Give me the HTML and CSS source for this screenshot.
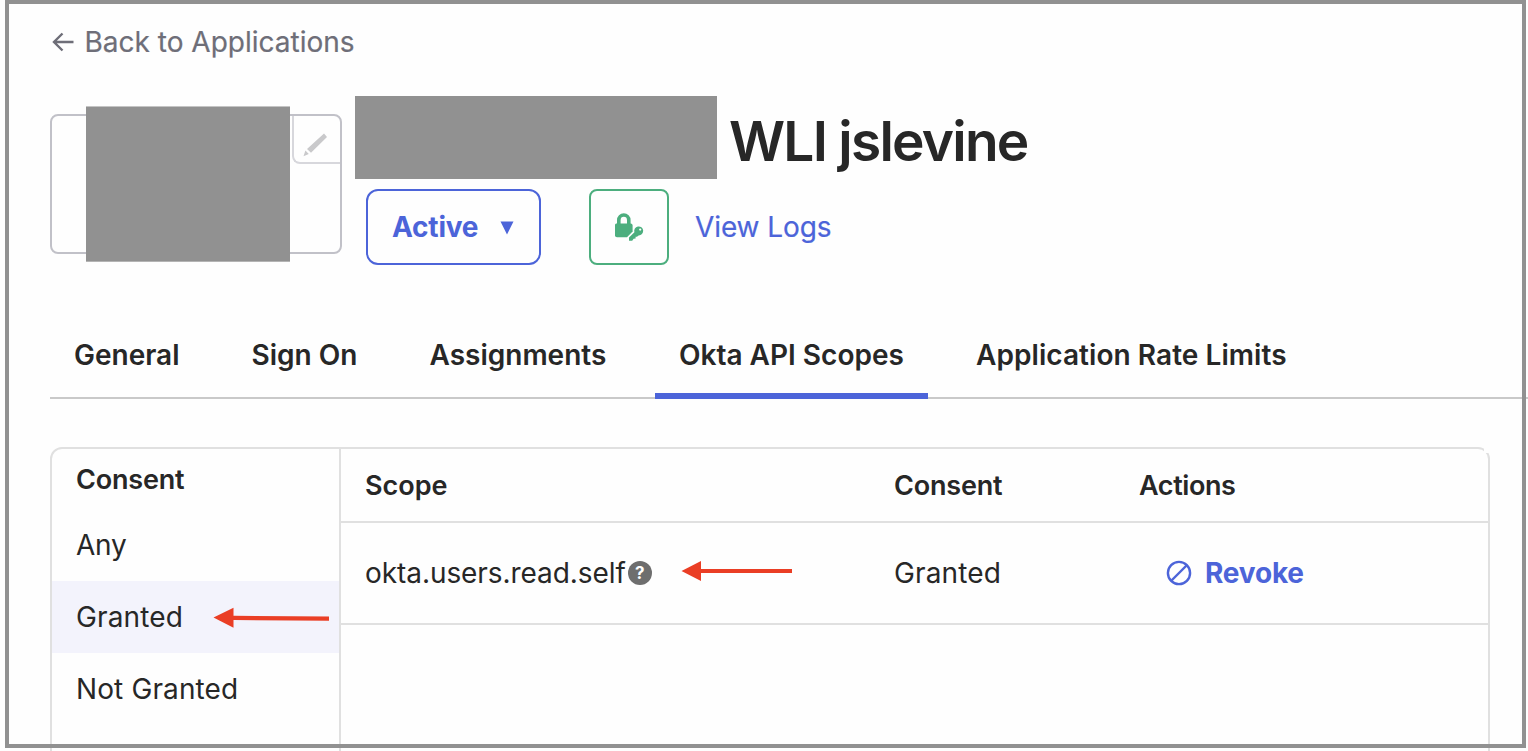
FILE: index.html
```html
<!DOCTYPE html>
<html lang="en">
<head>
<meta charset="utf-8">
<title>Okta API Scopes</title>
<link rel="stylesheet" href="styles.css">
</head>
<body>
<main class="page">
  <a class="back">
    <svg class="back-icon" width="24" height="20" viewBox="0 0 24 20"><path d="M22.5 10H3.5M11.5 1.5L3 10L11.5 18.5" fill="none" stroke="currentColor" stroke-width="2.4"/></svg>
    <span class="t-back">Back to Applications</span>
  </a>
  <header class="app-header">
    <div class="logo-box">
      <div class="logo-mask"></div>
      <div class="logo-edit">
        <svg width="24" height="24" viewBox="0 0 24 24" fill="#c9c9cb"><path d="M21 0.6L24 3.9L8 19.8L4 16ZM2.4 17.6L5.8 21L0.5 23.2Z"/></svg>
      </div>
    </div>
    <div class="app-info">
      <div class="title-row">
        <div class="title-mask"></div>
        <h1 class="title">WLI jslevine</h1>
      </div>
      <div class="actions">
        <button class="status"><span class="t-active">Active</span><svg class="caret" width="14" height="14" viewBox="0 0 14 14"><path d="M0.5 0.5H13.5L7 13.5Z" fill="currentColor"/></svg></button>
        <div class="lock">
          <svg width="30" height="30" viewBox="0 0 30 30">
            <path d="M4.8 12V8.2a5 5.2 0 0 1 10 0V12" fill="none" stroke="currentColor" stroke-width="3.6"/>
            <path d="M2.2 11.5H16.7Q18.6 11.5 18.6 13.5V19.5L13 25.2H3Q1 25.2 1 23.5V13Q1 11.5 2.2 11.5Z" fill="currentColor"/>
            <path d="M20.4 20.2A4.5 4.5 0 1 1 24.6 23.4L23 24.8L21.6 24.8L21.6 26.4L19.6 26.8L18.2 28.8H15V25.4Z" fill="currentColor"/>
            <circle cx="26.2" cy="17.6" r="1.1" fill="#fefefe"/>
          </svg>
        </div>
        <a class="logs"><span class="t-logs">View Logs</span></a>
      </div>
    </div>
  </header>
  <nav class="tabs">
    <a class="tab tab-general"><span class="t-general">General</span></a>
    <a class="tab tab-sign"><span class="t-sign">Sign On</span></a>
    <a class="tab tab-assign"><span class="t-assign">Assignments</span></a>
    <a class="tab tab-scopes"><span class="t-scopes">Okta API Scopes</span></a>
    <a class="tab tab-limits"><span class="t-limits">Application Rate Limits</span></a>
  </nav>
  <section class="panel">
    <aside class="filters">
      <h2 class="filter-title"><span class="heading">Consent</span></h2>
      <a class="filter"><span class="t-any">Any</span></a>
      <a class="filter selected"><span class="t-granted">Granted</span>
        <svg class="arrow-filter" width="118" height="22" viewBox="0 0 118 22" fill="#ea3e25"><path d="M0.5 10.6L20.5 0.8V8.7L116 9.6V13.8L20.5 13V20.8Z"/></svg>
      </a>
      <a class="filter"><span class="t-not">Not Granted</span></a>
    </aside>
    <div class="table">
      <div class="row head">
        <div><span class="heading scope">Scope</span></div><div><span class="heading">Consent</span></div><div><span class="heading actions-head">Actions</span></div>
      </div>
      <div class="row body-row">
        <div><span class="t-okta">okta.users.read.self</span><span class="help">?</span>
          <svg class="arrow-scope" width="112" height="22" viewBox="0 0 112 22" fill="#ea3e25"><path d="M0.5 11L20 1V9H111V13H20V21Z"/></svg>
        </div>
        <div><span class="t-granted">Granted</span></div>
        <div class="revoke"><svg width="26" height="26" viewBox="0 0 26 26"><circle cx="13" cy="13" r="11.1" fill="none" stroke="currentColor" stroke-width="2.4"/><path d="M21 5L5 21" stroke="currentColor" stroke-width="2.4"/></svg><span class="t-revoke">Revoke</span></div>
      </div>
    </div>
    <div class="corner"></div>
  </section>
</main>
<div class="frame"></div>
</body>
</html>
```
FILE: styles.css
```css
* { box-sizing: border-box; }
body {
  margin: 0;
  height: 751px;
  overflow: hidden;
  background: #fefefe;
  color: #272727;
  font: 400 28px/36px Inter, "Liberation Sans", sans-serif;
}
.page { height: 751px; padding-left: 50px; overflow: hidden; }
span { white-space: nowrap; }
.back { display: flex; align-items: center; gap: 9.5px; height: 36px; margin-top: 24px; padding-left: 1px; color: #6e6e78; -webkit-text-stroke: 0.2px; }
.app-header { display: flex; gap: 13px; margin-top: 36px; height: 169px; }
.logo-box { position: relative; width: 292px; height: 140px; margin-top: 18px; border: 2px solid #c1c1c8; border-radius: 8px; }
.logo-mask { position: absolute; left: 34px; top: -10px; width: 204px; height: 156px; background: #919191; border-top: 1px solid #c4c4c4; border-bottom: 1px solid #b4b4b4; }
.logo-edit { position: absolute; right: 0; top: 0; width: 48px; height: 48px; padding: 17px 0 0 9px; border-left: 2px solid #d7d7dc; border-bottom: 2px solid #d7d7dc; border-bottom-left-radius: 8px; line-height: 0; }
.title-row { display: flex; align-items: center; gap: 12px; height: 83px; }
.title-mask { width: 362px; height: 83px; background: #919191; }
.title { margin: 7px 0 0; font-size: 55px; line-height: 66px; font-weight: 600; letter-spacing: -1.75px; white-space: nowrap; }
.actions { display: flex; align-items: center; margin-top: 10px; padding-left: 11px; }
.status { display: flex; align-items: center; justify-content: space-between; width: 175px; height: 76px; padding: 0 25px 0 24px; border: 2px solid #4c64d9; border-radius: 12px; background: none; color: #4c64d9; font: inherit; font-weight: 700; letter-spacing: -0.2px; }
.caret { margin-top: 2px; }
.lock { display: grid; place-items: center; width: 80px; height: 76px; margin-left: 48px; border: 2px solid #4cae7e; border-radius: 8px; color: #4cae7e; }
.logs { margin-left: 26px; color: #4c64d9; letter-spacing: -0.1px; -webkit-text-stroke: 0.2px; }
.tabs { display: flex; height: 87px; margin-top: 47px; border-bottom: 2px solid #c9c9c9; font-weight: 600; }
.tab { height: 87px; padding: 25px 24px 0; }
.tab-general { width: 177.5px; }
.tab-sign { width: 178px; }
.tab-assign { width: 199px; }
.tab-scopes { width: 273px; margin-left: 50.5px; border-bottom: 6px solid #4c64d9; }
.tab-limits { margin-left: 24px; letter-spacing: 0.06px; }
.panel { position: relative; display: grid; grid-template-columns: 289px 1fr; width: 1440px; height: 320px; margin-top: 48px; border: 2px solid #e0e0e0; border-radius: 12px; }
.corner { position: absolute; right: -2px; top: -2px; width: 6px; height: 6px; background: #fefefe; }
.filters { border-right: 2px solid #e0e0e0; }
.filter-title { margin: 0; height: 60px; padding: 12px 24px 0; font-size: 28px; line-height: 36px; font-weight: 600; }
.heading { font-size: 27px; letter-spacing: -0.2px; }
.scope { letter-spacing: 0; }
.actions-head { letter-spacing: -0.4px; }
.filter { position: relative; display: flex; align-items: center; height: 72px; padding: 0 24px; }
.t-granted, .t-not { letter-spacing: 0.12px; }
.t-any { letter-spacing: -0.2px; }
.selected { background: #f3f3fc; }
.arrow-filter { position: absolute; left: 161px; top: 26px; }
.row { display: grid; grid-template-columns: 529px 245px 1fr; align-items: center; border-bottom: 2px solid #e0e0e0; }
.row > div { position: relative; display: flex; align-items: center; padding-left: 24px; }
.head { height: 74px; padding-top: 1px; font-weight: 600; }
.body-row { height: 102px; }
.t-okta { letter-spacing: -0.07px; }
.help { width: 24px; height: 24px; margin-left: 2px; border-radius: 50%; background: #6e6e6e; color: #fefefe; font-size: 17px; line-height: 24px; font-weight: 700; text-align: center; }
.arrow-scope { position: absolute; left: 340px; top: 5px; }
.row > .revoke { gap: 13px; padding-left: 51px; color: #4c64d9; font-weight: 700; letter-spacing: -0.2px; }
.frame { position: absolute; left: 5px; top: 0; width: 1521px; height: 748px; border: 4px solid #919191; }
```
